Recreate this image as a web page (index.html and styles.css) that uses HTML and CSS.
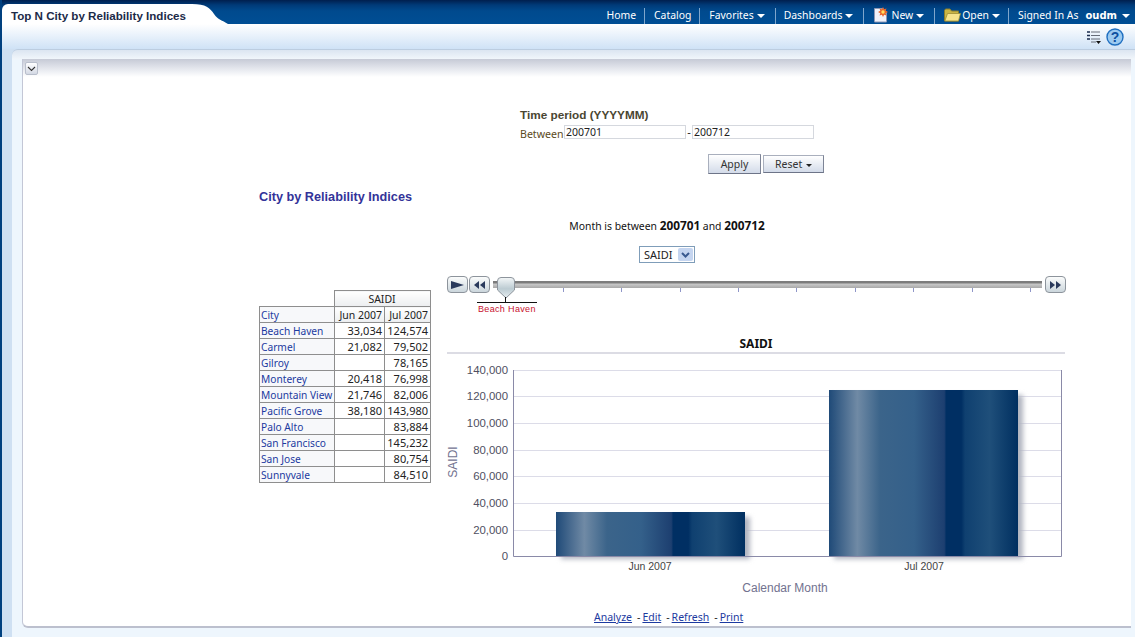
FILE: index.html
```html
<!DOCTYPE html>
<html lang="en">
<head>
  <meta charset="UTF-8" />
  <title>Top N City by Reliability Indices</title>
  <link rel="stylesheet" href="styles.css">
</head>
<body>
  <header class="topbar">
    <div class="tab">
      <span class="tab-title">Top N City by Reliability Indices</span>
      <svg class="tab-curve" width="36" height="24" viewBox="0 0 36 24"><path d="M0 4 C14 4 18 8 22 14 C26 20 30 20 36 24 L0 24 Z" fill="#fff"/></svg>
    </div>
    <nav class="nav">
      <a class="nav-item">Home</a>
      <a class="nav-item">Catalog</a>
      <a class="nav-item">Favorites<i class="caret"></i></a>
      <a class="nav-item nav-dash">Dashboards<i class="caret"></i></a>
      <a class="nav-item">
        <svg class="nav-icon" width="17" height="16" viewBox="0 0 17 16">
          <path d="M1.500 1.500H10L13.500 5V15H1.500Z" fill="#f0f2fa" stroke="#8d97b5"/>
          <path d="M10 0L11.100 2.200 13.500 1.400 12.700 3.800 15 5 12.700 6.200 13.500 8.600 11.100 7.800 10 10 8.900 7.800 6.500 8.600 7.300 6.200 5 5 7.300 3.800 6.500 1.400 8.900 2.200Z" fill="#e8672a"/>
          <circle cx="10" cy="5" r="1.700" fill="#ffe060"/>
        </svg>New<i class="caret"></i>
      </a>
      <a class="nav-item nav-open">
        <svg class="nav-icon" width="17" height="14" viewBox="0 0 17 14">
          <path d="M.5 13V2.500L1.500 1H6L7.500 3H14.500V13Z" fill="#c9b544" stroke="#8a7d2c"/>
          <path d="M.8 13L3.500 5.500H16.500L14.500 13Z" fill="#f6e48c" stroke="#9c8d34" stroke-width=".8"/>
        </svg>Open<i class="caret"></i>
      </a>
      <span class="nav-item">Signed In As<b class="user-name">oudm</b><i class="caret"></i></span>
    </nav>
  </header>

  <div class="toolbar">
    <svg width="14" height="14" viewBox="0 0 14 14">
      <path d="M4 2H13M4 5.500H13M4 9H13M4 12H9" stroke="#666c78" stroke-width="1"/>
      <path d="M0 2H3M0 5.500H3M0 9H3" stroke="#1b2c4e" stroke-width="1.400"/>
      <path d="M9 11H14L11.500 14Z" fill="#111"/>
    </svg>
    <svg width="18" height="18" viewBox="0 0 18 18">
      <circle cx="9" cy="9" r="8" fill="#9ccaf0" stroke="#1f6fc0" stroke-width="1.400"/>
      <text x="9" y="13.500" text-anchor="middle" class="help-mark">?</text>
    </svg>
  </div>

  <main class="outer">
    <div class="outer-frame">
      <section class="panel">
        <button class="collapse" aria-label="Collapse">
          <svg width="9" height="6" viewBox="0 0 9 6"><path d="M1 1L4.500 4.500 8 1" fill="none" stroke="#333" stroke-width="1.100"/></svg>
        </button>

        <form class="prompt">
          <div class="prompt-label">Time period (YYYYMM)</div>
          <div class="prompt-row">
            <span class="prompt-between">Between</span>
            <input class="prompt-input" value="200701" />
            <span class="prompt-dash">-</span>
            <input class="prompt-input" value="200712" />
          </div>
          <div class="prompt-buttons">
            <button type="button" class="btn btn-apply">Apply</button>
            <button type="button" class="btn btn-reset">Reset <i class="caret caret-dark"></i></button>
          </div>
        </form>

        <div class="report">
          <h2 class="report-title">City by Reliability Indices</h2>
          <p class="filter-note">Month is between <b>200701</b> and <b>200712</b></p>
          <div class="view-select">
            <span class="select-box">SAIDI <span class="select-arrow"><svg width="9" height="6" viewBox="0 0 9 6"><path d="M1 1L4.500 4.500 8 1" fill="none" stroke="#3a5a90" stroke-width="2"/></svg></span></span>
          </div>

          <div class="report-body">
            <table class="pivot">
              <colgroup><col class="col-city"><col class="col-jun"><col class="col-jul"></colgroup>
              <thead>
                <tr><th class="blank"></th><th colspan="2" class="center">SAIDI</th></tr>
                <tr><th class="city-head">City</th><th>Jun 2007</th><th>Jul 2007</th></tr>
              </thead>
              <tbody>
                <tr><td class="city">Beach Haven</td><td>33,034</td><td>124,574</td></tr>
                <tr><td class="city">Carmel</td><td>21,082</td><td>79,502</td></tr>
                <tr><td class="city">Gilroy</td><td></td><td>78,165</td></tr>
                <tr><td class="city">Monterey</td><td>20,418</td><td>76,998</td></tr>
                <tr><td class="city">Mountain View</td><td>21,746</td><td>82,006</td></tr>
                <tr><td class="city">Pacific Grove</td><td>38,180</td><td>143,980</td></tr>
                <tr><td class="city">Palo Alto</td><td></td><td>83,884</td></tr>
                <tr><td class="city">San Francisco</td><td></td><td>145,232</td></tr>
                <tr><td class="city">San Jose</td><td></td><td>80,754</td></tr>
                <tr><td class="city">Sunnyvale</td><td></td><td>84,510</td></tr>
              </tbody>
            </table>

            <div class="chart-col">
              <div class="slider">
                <button class="slide-btn" aria-label="Play"><svg width="13" height="8" viewBox="0 0 13 8"><path d="M0 0L13 4 0 8Z" fill="#2a3a5c"/></svg></button>
                <button class="slide-btn" aria-label="Back"><svg width="11" height="8" viewBox="0 0 11 8"><path d="M5 0V8L0 4ZM11 0V8L6 4Z" fill="#2a3a5c"/></svg></button>
                <div class="track">
                  <div class="track-bar"></div>
                  <div class="ticks"><i></i><i></i><i></i><i></i><i></i><i></i><i></i><i></i><i></i></div>
                  <div class="thumb">
                    <svg width="18" height="22" viewBox="0 0 18 22">
                      <defs><linearGradient id="thumbFill" x1="0" y1="0" x2="0" y2="1"><stop offset="0" stop-color="#f4f7f8"/><stop offset=".55" stop-color="#bccbd2"/><stop offset="1" stop-color="#e6edf0"/></linearGradient></defs>
                      <path d="M.5 4Q.5 .5 4 .5H14Q17.500 .5 17.500 4V13L9 21 .5 13Z" fill="url(#thumbFill)" stroke="#8d949c"/>
                    </svg>
                    <div class="thumb-stem"></div>
                    <div class="thumb-label">Beach Haven</div>
                  </div>
                </div>
                <button class="slide-btn" aria-label="Forward"><svg width="11" height="8" viewBox="0 0 11 8"><path d="M0 0V8L5 4ZM6 0V8L11 4Z" fill="#2a3a5c"/></svg></button>
              </div>

              <div class="chart-title">SAIDI</div>

              <svg class="chart" width="620" height="252" viewBox="447 354 620 252">
                <defs>
                  <linearGradient id="barFill" x1="0" y1="0" x2="1" y2="0">
                    <stop offset="0" stop-color="#1f4a78"/>
                    <stop offset=".15" stop-color="#708aa5"/>
                    <stop offset=".27" stop-color="#3b648a"/>
                    <stop offset=".45" stop-color="#34608a"/>
                    <stop offset=".61" stop-color="#1d3f70"/>
                    <stop offset=".62" stop-color="#002f63"/>
                    <stop offset=".7" stop-color="#002f63"/>
                    <stop offset=".72" stop-color="#0f4070"/>
                    <stop offset=".85" stop-color="#1f4f7a"/>
                    <stop offset="1" stop-color="#002f60"/>
                  </linearGradient>
                  <filter id="barShadow" x="-10%" y="-10%" width="125%" height="125%"><feGaussianBlur stdDeviation="2.500"/></filter>
                </defs>
                <g class="grid">
                  <path d="M513 370.500H1061M513 396.500H1061M513 423.500H1061M513 450.500H1061M513 476.500H1061M513 503.500H1061M513 530.500H1061"/>
                </g>
                <rect x="561" y="517" width="189" height="42" fill="#b0b4bf" filter="url(#barShadow)"/>
                <rect x="834" y="395" width="189" height="164" fill="#b0b4bf" filter="url(#barShadow)"/>
                <rect x="556" y="512" width="189" height="44.500" fill="url(#barFill)"/>
                <rect x="829" y="390" width="189" height="166.500" fill="url(#barFill)"/>
                <path class="axis" d="M513.500 370V556.500H1061.500V370"/>
                <g class="tick-labels">
                  <text x="508" y="374">140,000</text>
                  <text x="508" y="400">120,000</text>
                  <text x="508" y="427">100,000</text>
                  <text x="508" y="454">80,000</text>
                  <text x="508" y="480">60,000</text>
                  <text x="508" y="507">40,000</text>
                  <text x="508" y="534">20,000</text>
                  <text x="508" y="560">0</text>
                </g>
                <g class="cat-labels">
                  <text x="650" y="570">Jun 2007</text>
                  <text x="924" y="570">Jul 2007</text>
                </g>
                <text class="axis-title" x="785" y="592">Calendar Month</text>
                <text class="axis-title" transform="translate(457 462) rotate(-90)">SAIDI</text>
              </svg>

              <div class="report-links">
                <a>Analyze</a><span class="link-sep">-</span><a>Edit</a><span class="link-sep">-</span><a>Refresh</a><span class="link-sep">-</span><a>Print</a>
              </div>
            </div>
          </div>
        </div>
      </section>
    </div>
  </main>
</body>
</html>
```

FILE: styles.css
```css
/* page frame */
html, body {
  margin: 0;
  padding: 0;
  height: 100%;
  overflow: hidden;
}

body {
  background: #eef6fd;
  border-left: 2px solid #00407f;
  box-sizing: border-box;
  font-family: "Noto Sans", "Liberation Sans", sans-serif;
  font-size: 11px;
  color: #222;
}

/* top bar */
.topbar {
  display: flex;
  justify-content: space-between;
  height: 24px;
  margin-left: -2px;
  background: linear-gradient(#001f4e 0, #003a78 5px, #004a8e 11px, #004e94 24px);
}

.tab {
  position: relative;
  width: 190px;
  margin-top: 4px;
  margin-left: 2px;
  background: #fff;
  border-radius: 6px 0 0 0;
}

.tab-title {
  display: block;
  padding: 5px 0 0 9px;
  font-family: "Liberation Sans", sans-serif;
  font-weight: bold;
  font-size: 11.600px;
  color: #1c2a48;
  white-space: nowrap;
}

.tab-curve {
  position: absolute;
  left: 190px;
  top: -4px;
}

.nav {
  display: flex;
  height: 24px;
  padding-right: 3px;
  color: #fff;
}

.nav-item {
  display: flex;
  align-items: center;
  height: 16px;
  margin-top: 8px;
  padding: 0 8px 2px 9px;
  box-sizing: border-box;
  border-left: 1px solid #7fa6cc;
  color: #fff;
  white-space: pre;
  font-size: 10.400px;
}

.nav-item:first-child {
  border-left: none;
}

.nav-item:last-child {
  padding-right: 0;
}

.nav-dash {
  padding-left: 8px;
}

.nav-open {
  padding-right: 6px;
}

.nav-icon {
  margin-right: 1px;
}

.user-name {
  margin: 0 2px 0 7px;
  font-family: "DejaVu Sans", sans-serif;
  font-size: 10px;
}

.caret {
  display: inline-block;
  width: 0;
  height: 0;
  margin: 2px 2px 0 3px;
  border-left: 4px solid transparent;
  border-right: 4px solid transparent;
  border-top: 4px solid #fff;
}

.caret-dark {
  margin: 0 0 0 1px;
  border-left-width: 3px;
  border-right-width: 3px;
  border-top: 3px solid #222;
  vertical-align: middle;
}

/* toolbar under the bar */
.toolbar {
  display: flex;
  justify-content: flex-end;
  align-items: center;
  gap: 5px;
  height: 25px;
  padding: 1px 11px 0 0;
  box-sizing: border-box;
  background: linear-gradient(#ffffff, #cfe2f6);
}

.help-mark {
  font-family: "Liberation Sans", sans-serif;
  font-weight: bold;
  font-size: 14px;
  fill: #0d4fa0;
}

/* content area */
.outer {
  height: 588px;
  padding-left: 10px;
  background: #cfe0f2;
}

.outer-frame {
  height: 588px;
  padding: 9px 4px 0 10px;
  box-sizing: border-box;
  background: linear-gradient(#dbe5f1 0, #f1f6fb 9px, #eef6fd 10px);
  border-top: 1px solid #bccde0;
  border-radius: 6px 0 0 0;
}

.panel {
  position: relative;
  height: 569px;
  box-sizing: border-box;
  background: linear-gradient(#c6cad6 0, #eceef3 12px, #ffffff 18px);
  border-left: 1px solid #c3c7d6;
  border-bottom: 2px solid #bcc0ce;
  border-radius: 0 0 0 6px;
}

.collapse {
  position: absolute;
  left: 2px;
  top: 3px;
  display: flex;
  align-items: center;
  justify-content: center;
  width: 13px;
  height: 13px;
  padding: 0;
  border: 1px solid #b9bfcc;
  border-radius: 2px;
  background: linear-gradient(#fff, #d3d8e4);
}

/* prompt */
.prompt {
  padding: 48px 0 0 497px;
  width: 307px;
}

.prompt-label {
  font-family: "Liberation Sans", sans-serif;
  font-weight: bold;
  font-size: 11.750px;
  line-height: 15px;
  color: #4a4632;
}

.prompt-row {
  display: flex;
  align-items: center;
  height: 15px;
  margin-top: 2px;
}

.prompt-between {
  width: 44px;
  color: #5b4a1c;
  font-size: 10.600px;
  padding-top: 5px;
}

.prompt-input {
  width: 122px;
  height: 14px;
  box-sizing: border-box;
  padding: 0 1px;
  border: 1px solid #d5d8de;
  font: 10.500px "Noto Sans", sans-serif;
  color: #222;
}

.prompt-dash {
  width: 6px;
  text-align: center;
}

.prompt-buttons {
  display: flex;
  align-items: center;
  gap: 2px;
  margin: 15px 0 0 188px;
}

.btn {
  padding: 0;
  border: 1px solid #a9afbd;
  border-bottom-color: #6d7488;
  border-right-color: #7d8496;
  background: linear-gradient(#ffffff, #d3dbe9);
  font: 10.500px "Noto Sans", sans-serif;
  color: #333;
}

.btn-apply {
  width: 53px;
  height: 20px;
}

.btn-reset {
  width: 61px;
  height: 18px;
}

/* report */
.report {
  padding-left: 236px;
}

.report-title {
  margin: 15px 0 0;
  font-family: "Liberation Sans", sans-serif;
  font-size: 12.700px;
  line-height: 17px;
  color: #333399;
}

.filter-note {
  width: 816px;
  margin: 12px 0 0;
  text-align: center;
  font-size: 10.400px;
  line-height: 15px;
  color: #111;
}

.filter-note b {
  font-size: 11.800px;
}

.view-select {
  width: 816px;
  margin-top: 12px;
  height: 17px;
  display: flex;
  justify-content: center;
}

.select-box {
  display: flex;
  align-items: center;
  justify-content: space-between;
  width: 56px;
  height: 17px;
  box-sizing: border-box;
  padding: 0 1px 0 4px;
  border: 1px solid #7f9db9;
  background: #fff;
  color: #222;
}

.select-arrow {
  display: flex;
  align-items: center;
  justify-content: center;
  width: 15px;
  height: 13px;
  background: #c5d5f0;
  border-radius: 2px;
}

.report-body {
  display: flex;
  gap: 16px;
  margin-top: 13px;
}

/* pivot table */
.pivot {
  border-collapse: collapse;
  table-layout: fixed;
  width: 171px;
  height: 193px;
  margin-top: 14px;
  align-self: flex-start;
  font-size: 11px;
}

.col-city {
  width: 75px;
}

.col-jun {
  width: 50px;
}

.col-jul {
  width: 46px;
}

.pivot th, .pivot td {
  height: 15px;
  padding: 1px 2px 0 1px;
  box-sizing: border-box;
  border: 1px solid #8e8e8e;
  font-weight: normal;
  text-align: right;
  white-space: nowrap;
  color: #222;
  line-height: 14px;
  background: #fff;
}

.pivot th {
  background: linear-gradient(#ffffff, #eceef0);
  font-size: 10.500px;
}

.pivot .blank {
  border: none;
  border-bottom: 1px solid #8e8e8e;
  background: none;
}

.pivot .center {
  text-align: center;
}

.pivot .city-head, .pivot .city {
  text-align: left;
  font-size: 10.200px;
  color: #1c3aa0;
  background: #f7f8fa;
}

/* slider */
.chart-col {
  width: 620px;
}

.slider {
  display: flex;
  align-items: flex-start;
  height: 42px;
}

.slide-btn {
  display: flex;
  align-items: center;
  justify-content: center;
  width: 21px;
  height: 17px;
  padding: 0;
  margin-right: 1px;
  border: 1px solid #8d949c;
  border-radius: 4px;
  background: linear-gradient(#fbfcfc, #cbd6dc);
}

.track {
  position: relative;
  width: 554px;
  height: 17px;
  margin-right: 2px;
}

.track-bar {
  position: absolute;
  left: 2px;
  right: 1px;
  top: 5px;
  height: 7px;
  background: linear-gradient(#7c7c7c 0, #7c7c7c 2px, #c9c9c9 3px, #a8a8a8 7px);
}

.ticks {
  position: absolute;
  left: 72px;
  top: 12px;
  display: flex;
  gap: 57.400px;
}

.ticks i {
  width: 1px;
  height: 4px;
  background: #8f96c8;
}

.thumb {
  position: absolute;
  left: 6px;
  top: 1px;
  width: 18px;
}

.thumb svg {
  display: block;
}

.thumb-stem {
  position: absolute;
  left: 8px;
  top: 20px;
  width: 1px;
  height: 5px;
  background: #111;
}

.thumb-label {
  position: absolute;
  left: -20px;
  top: 25px;
  width: 60px;
  border-top: 1px solid #111;
  text-align: center;
  font-family: "Liberation Sans", sans-serif;
  font-size: 9px;
  letter-spacing: .35px;
  line-height: 13px;
  color: #c8102e;
  white-space: nowrap;
}

/* chart */
.chart-title {
  width: 618px;
  margin-top: 16px;
  height: 20px;
  box-sizing: border-box;
  border-bottom: 2px solid #dcdce4;
  text-align: center;
  font-family: "Noto Sans", sans-serif;
  font-weight: bold;
  font-size: 12px;
  line-height: 19px;
  color: #111;
}

.chart {
  display: block;
}

.chart text {
  font-family: "Liberation Sans", sans-serif;
}

.grid path {
  stroke: #dcdce8;
  fill: none;
}

.axis {
  stroke: #8a8aa8;
  fill: none;
}

.tick-labels text {
  text-anchor: end;
  font-size: 11.400px;
  fill: #4f4f62;
}

.cat-labels text {
  text-anchor: middle;
  font-size: 10.500px;
  fill: #444;
}

.chart .axis-title {
  text-anchor: middle;
  font-size: 12px;
  fill: #72728f;
}

.report-links {
  display: flex;
  margin-top: 4px;
  padding-left: 147px;
  font-size: 10.500px;
  line-height: 15px;
}

.report-links a {
  color: #1c3aa0;
  text-decoration: underline;
}

.link-sep {
  padding: 0 2px 0 5px;
  color: #222;
}
```
